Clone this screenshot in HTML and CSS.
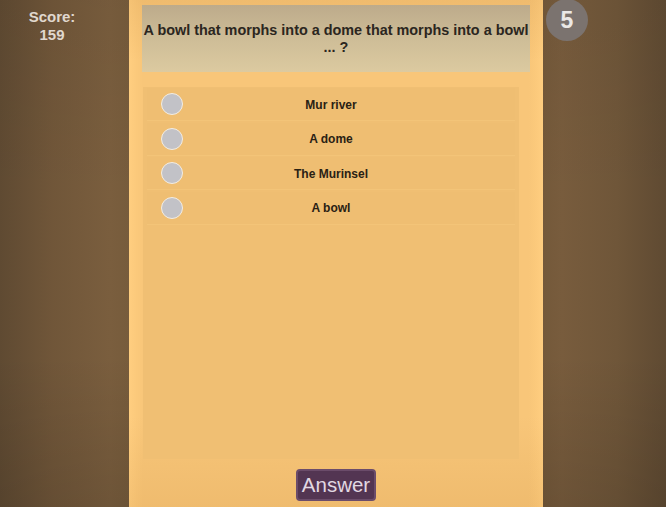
FILE: index.html
```html
<!DOCTYPE html>
<html>
<head>
<meta charset="utf-8">
<link rel="stylesheet" href="styles.css">
</head>
<body>
<div class="screen">
  <aside class="side side-left">
    <div class="score">Score:<br>159</div>
  </aside>
  <main class="panel">
    <div class="question">A bowl that morphs into a dome that morphs into a bowl<br>... ?</div>
    <div class="options">
      <label class="option"><span class="radio"></span><span class="label">Mur river</span></label>
      <label class="option"><span class="radio"></span><span class="label">A dome</span></label>
      <label class="option"><span class="radio"></span><span class="label">The Murinsel</span></label>
      <label class="option"><span class="radio"></span><span class="label">A bowl</span></label>
    </div>
    <div class="actions">
      <button class="answer">Answer</button>
    </div>
  </main>
  <aside class="side side-right">
    <div class="counter">5</div>
  </aside>
</div>
</body>
</html>
```
FILE: styles.css
```css
html, body {
  margin: 0;
  padding: 0;
}
body {
  width: 666px;
  height: 507px;
  overflow: hidden;
  font-family: "Liberation Sans", Arial, sans-serif;
  background: #6e5538;
}
.screen {
  display: grid;
  grid-template-columns: 129px 414px 123px;
  height: 507px;
}
.side {
  display: flex;
  flex-direction: column;
}
.side-left {
  padding-top: 8px;
  padding-left: 8px;
  box-sizing: border-box;
  align-items: flex-start;
  background:
    linear-gradient(to bottom, rgba(0,0,0,0.04) 0%, rgba(0,0,0,0) 40%, rgba(0,0,0,0) 70%, rgba(0,0,0,0.1) 100%),
    linear-gradient(to right, #5f4a32 0%, #705639 40%, #7a5e3e 85%, #775c3c 100%);
}
.side-right {
  padding-left: 3px;
  background:
    linear-gradient(to bottom, rgba(0,0,0,0.04) 0%, rgba(0,0,0,0) 40%, rgba(0,0,0,0) 70%, rgba(0,0,0,0.1) 100%),
    linear-gradient(to left, #5f4a32 0%, #6f5639 40%, #785c3d 85%, #74593a 100%);
}
.score {
  width: 88px;
  text-align: center;
  color: #e0d8ce;
  font-size: 15px;
  line-height: 18px;
  font-weight: bold;
}
.counter {
  width: 42px;
  height: 42px;
  margin-top: -1px;
  border-radius: 50%;
  background: #7b736f;
  color: #ebe8e6;
  font-size: 23px;
  font-weight: bold;
  display: flex;
  align-items: center;
  justify-content: center;
}
.panel {
  display: flex;
  flex-direction: column;
  background:
    linear-gradient(to bottom, rgba(150,80,0,0.09) 0%, rgba(150,80,0,0) 12%, rgba(150,80,0,0) 82%, rgba(150,80,0,0.09) 100%),
    linear-gradient(to right, #ffce80 0px, #fbc97b 8px, #f8c679 14px, #f8c679 calc(100% - 14px), #fbc97b calc(100% - 8px), #ffce80 100%);
}
.question {
  margin: 5px 13px 0 13px;
  height: 67px;
  box-sizing: border-box;
  padding: 17px 0 0 0;
  text-align: center;
  color: #2b2620;
  font-size: 14.4px;
  line-height: 17px;
  font-weight: bold;
  white-space: nowrap;
  background: linear-gradient(to bottom, #bdab8b 0%, #cfbe98 55%, #dccaa0 100%);
}
.options {
  margin: 15px 24px 0 14px;
  height: 372px;
  box-sizing: border-box;
  padding: 1px 4px;
  display: flex;
  flex-direction: column;
  gap: 1.5px;
  background: #f0bf73;
}
.option {
  position: relative;
  height: 33px;
  display: flex;
  align-items: center;
  justify-content: center;
  background: #efbe72;
  box-shadow: inset 0 -1px 0 rgba(255,215,140,0.25);
}
.radio {
  position: absolute;
  left: 14px;
  top: 5px;
  width: 20px;
  height: 20px;
  border-radius: 50%;
  background: #c2c2c7;
  border: 1.5px solid #f3ede3;
}
.label {
  font-size: 12px;
  font-weight: bold;
  color: #2a2114;
}
.actions {
  display: flex;
  justify-content: center;
  padding-top: 10px;
}
.answer {
  width: 80px;
  height: 32px;
  padding: 0;
  border: 2px solid #6b4c6a;
  border-radius: 4px;
  background: #533552;
  color: #e2d8e2;
  font-family: "Liberation Sans", Arial, sans-serif;
  font-size: 20.5px;
  line-height: 28px;
}
```
